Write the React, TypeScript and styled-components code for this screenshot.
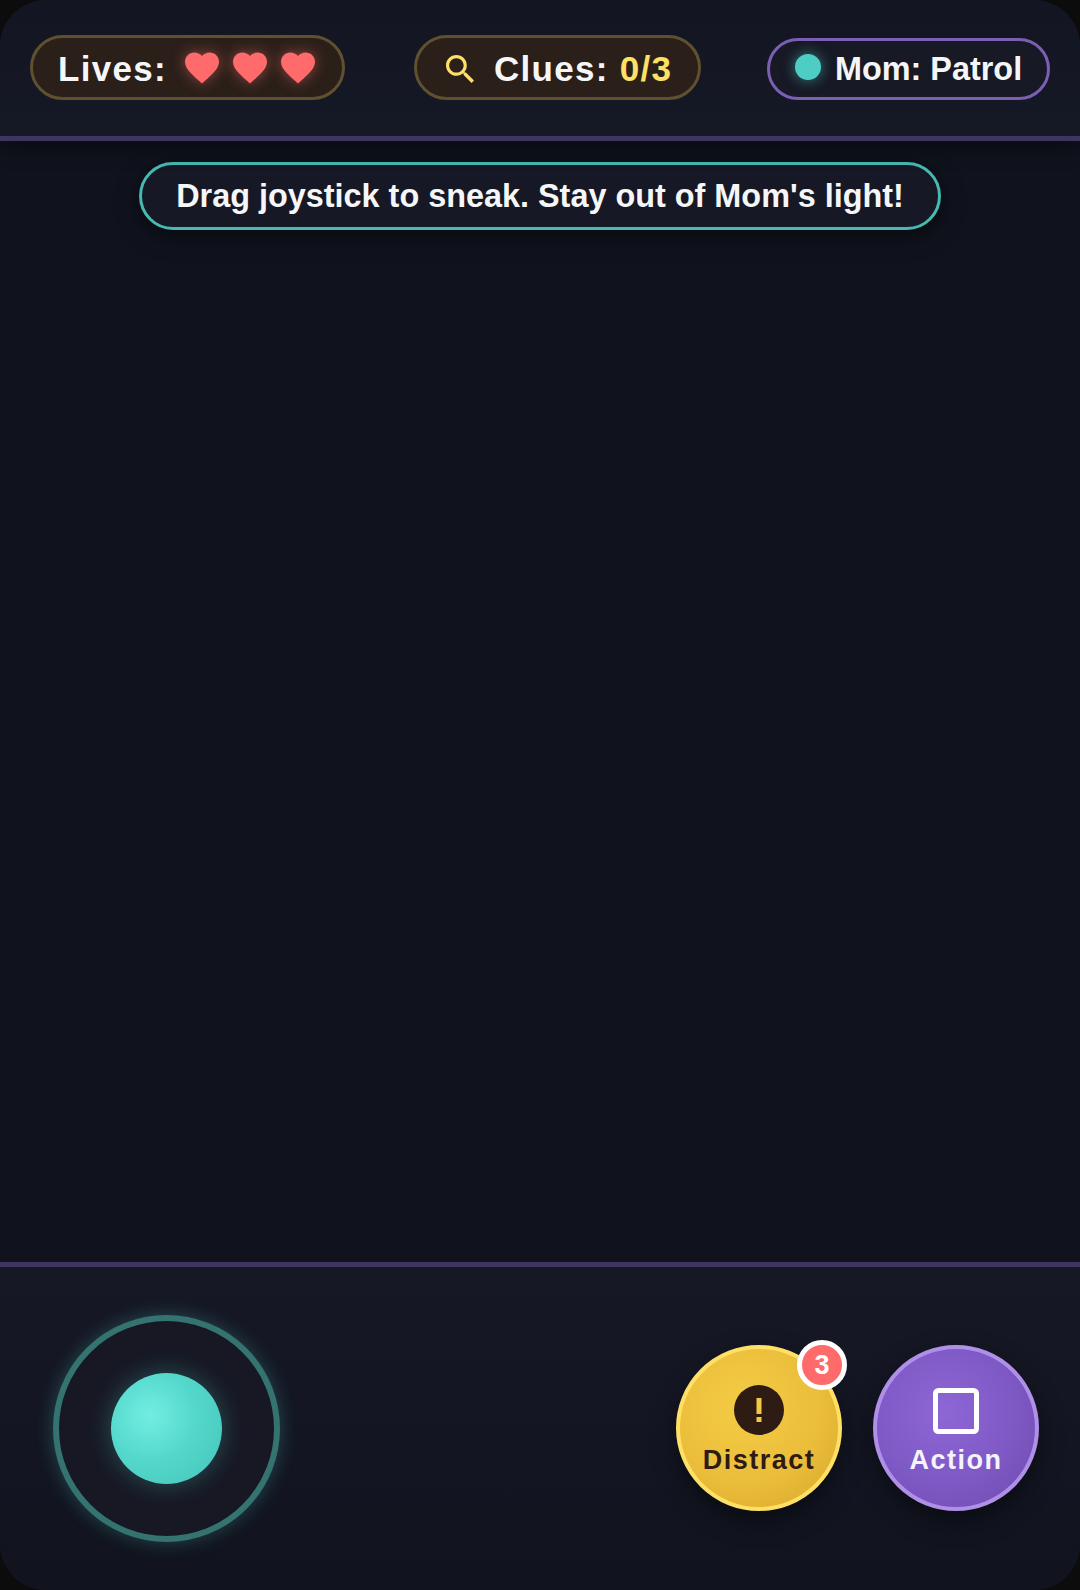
import React from "react";
import styled, { createGlobalStyle } from "styled-components";

const Global = createGlobalStyle`
  html, body { margin: 0; padding: 0; background: #0c0c0c; }
  body { font-family: "Liberation Sans", Arial, sans-serif; }
  * { box-sizing: border-box; }
`;

const Frame = styled.div`
  width: 1080px;
  height: 1590px;
  border-radius: 46px;
  overflow: hidden;
  display: flex;
  flex-direction: column;
  background: #10131d;
`;

const TopBar = styled.header`
  height: 141px;
  flex: none;
  display: flex;
  align-items: flex-start;
  padding: 35px 30px 0 30px;
  background: linear-gradient(180deg, #131522 0%, #151825 100%);
  border-bottom: 5px solid #3f3560;
  box-shadow: 0 6px 20px rgba(0, 0, 0, 0.45);
  position: relative;
  z-index: 1;
`;

const GoldPill = styled.div<{ $w: number; $gap: number }>`
  width: ${(p) => p.$w}px;
  height: 65px;
  margin-right: ${(p) => p.$gap}px;
  flex: none;
  display: flex;
  align-items: center;
  padding-top: 2px;
  border: 3px solid #5f5130;
  border-radius: 33px;
  background: #2b1f19;
  color: #f5f6f8;
  font-size: 35px;
  font-weight: 700;
  letter-spacing: 1.3px;
  white-space: nowrap;
`;

const LivesLabel = styled.span`
  margin-left: 25px;
  margin-right: 18px;
`;

const HeartRow = styled.div`
  display: flex;
  gap: 14px;
  margin-bottom: 2px;
`;

const Heart = styled.svg`
  width: 34px;
  height: 32px;
  display: block;
  fill: #ff6b6b;
  filter: drop-shadow(0 0 7px rgba(255, 107, 107, 0.5));
`;

const SearchIcon = styled.svg`
  width: 28px;
  height: 28px;
  margin-left: 29px;
  margin-right: 20px;
  flex: none;
  fill: #ffe066;
`;

const Gold = styled.span`
  color: #ffe066;
`;

const MomPill = styled.div`
  width: 283px;
  height: 62px;
  margin-top: 3px;
  flex: none;
  display: flex;
  align-items: center;
  gap: 14px;
  padding-left: 25px;
  border: 3px solid #7b5fb3;
  border-radius: 31px;
  background: #171925;
  color: #f5f6f8;
  font-size: 32.4px;
  font-weight: 700;
  white-space: nowrap;
`;

const Dot = styled.span`
  width: 26px;
  height: 26px;
  margin-bottom: 4px;
  flex: none;
  border-radius: 50%;
  background: #4ecdc4;
  box-shadow: 0 0 14px rgba(78, 205, 196, 0.6);
`;

const Stage = styled.main`
  flex: 1;
  position: relative;
  background: #10131d;
`;

const Tip = styled.div`
  position: absolute;
  top: 21px;
  left: 139px;
  width: 802px;
  height: 68px;
  display: flex;
  align-items: center;
  justify-content: center;
  border: 3px solid #46b9b0;
  border-radius: 34px;
  background: #161925;
  color: #f5f6f8;
  font-size: 32.4px;
  font-weight: 700;
  white-space: nowrap;
  box-shadow: 0 6px 22px rgba(0, 0, 0, 0.5);
`;

const Controls = styled.footer`
  height: 328px;
  flex: none;
  display: flex;
  align-items: flex-start;
  justify-content: space-between;
  padding: 48px 41px 0 53px;
  background: linear-gradient(180deg, #161825 0%, #131622 60%, #11141e 100%);
  border-top: 5px solid #3f3560;
`;

const JoyRing = styled.div`
  width: 227px;
  height: 227px;
  display: flex;
  align-items: center;
  justify-content: center;
  border: 6px solid #34736f;
  border-radius: 50%;
  background: #171824;
  box-shadow: 0 0 18px rgba(78, 205, 196, 0.28);
`;

const JoyKnob = styled.div`
  width: 111px;
  height: 111px;
  border-radius: 50%;
  background: radial-gradient(circle at 35% 38%, #72eee1 0%, #55d8cc 45%, #43c3ba 100%);
  box-shadow: 0 0 26px rgba(78, 205, 196, 0.32);
`;

const Buttons = styled.div`
  display: flex;
  gap: 31px;
  margin-top: 30px;
`;

const RoundButton = styled.div<{ $variant: "gold" | "purple" }>`
  width: 166px;
  height: 166px;
  position: relative;
  display: flex;
  flex-direction: column;
  align-items: center;
  padding-top: ${(p) => (p.$variant === "gold" ? 35 : 38)}px;
  border-radius: 50%;
  border: 4px solid ${(p) => (p.$variant === "gold" ? "#ffe066" : "#b08fe8")};
  background: ${(p) =>
    p.$variant === "gold"
      ? "radial-gradient(circle at 40% 36%, #f5cc45 0%, #eabd3a 55%, #d9a82c 100%)"
      : "radial-gradient(circle at 42% 40%, #8e67d6 0%, #7e58c4 55%, #6c4bac 100%)"};
  color: ${(p) => (p.$variant === "gold" ? "#2d1b14" : "#f5f3fb")};
  box-shadow: 0 10px 26px rgba(0, 0, 0, 0.45);
`;

const ButtonLabel = styled.span<{ $top: number }>`
  margin-top: ${(p) => p.$top}px;
  font-size: 27px;
  line-height: 31px;
  font-weight: 700;
  letter-spacing: 1.5px;
`;

const AlertIcon = styled.svg`
  width: 50px;
  height: 50px;
  margin-top: 1px;
  display: block;
`;

const SquareIcon = styled.svg`
  width: 46px;
  height: 46px;
  margin-top: 1px;
  display: block;
  fill: none;
  stroke: #ffffff;
  stroke-width: 5;
`;

const Badge = styled.span`
  position: absolute;
  top: -9px;
  right: -9px;
  width: 50px;
  height: 50px;
  display: flex;
  align-items: center;
  justify-content: center;
  border: 5px solid #ffffff;
  border-radius: 50%;
  background: #ff6b6b;
  color: #ffffff;
  font-size: 27px;
  font-weight: 700;
`;

const heartPath =
  "M12 21.35l-1.45-1.32C5.4 15.36 2 12.28 2 8.5 2 5.42 4.42 3 7.5 3c1.74 0 3.41.81 4.5 2.09C13.09 3.81 14.76 3 16.5 3 19.58 3 22 5.42 22 8.5c0 3.78-3.4 6.86-8.55 11.54L12 21.35z";

const searchPath =
  "M15.5 14h-.79l-.28-.27C15.41 12.59 16 11.11 16 9.5 16 5.91 13.09 3 9.5 3S3 5.91 3 9.5 5.91 16 9.5 16c1.61 0 3.09-.59 4.23-1.57l.27.28v.79l5 4.99L20.49 19l-4.99-5zm-6 0C7.01 14 5 11.99 5 9.5S7.01 5 9.5 5 14 7.01 14 9.5 11.99 14 9.5 14z";

export default function App() {
  return (
    <>
      <Global />
      <Frame>
        <TopBar>
          <GoldPill $w={315} $gap={69}>
            <LivesLabel>Lives:</LivesLabel>
            <HeartRow>
              {[0, 1, 2].map((i) => (
                <Heart key={i} viewBox="2 3 20 18.35">
                  <path d={heartPath} />
                </Heart>
              ))}
            </HeartRow>
          </GoldPill>
          <GoldPill $w={287} $gap={66}>
            <SearchIcon viewBox="3 3 17.5 17.5">
              <path d={searchPath} />
            </SearchIcon>
            <span>
              Clues: <Gold>0/3</Gold>
            </span>
          </GoldPill>
          <MomPill>
            <Dot />
            <span>Mom: Patrol</span>
          </MomPill>
        </TopBar>
        <Stage>
          <Tip>Drag joystick to sneak. Stay out of Mom's light!</Tip>
        </Stage>
        <Controls>
          <JoyRing>
            <JoyKnob />
          </JoyRing>
          <Buttons>
            <RoundButton $variant="gold">
              <AlertIcon viewBox="0 0 50 50">
                <circle cx="25" cy="25" r="25" fill="#2d1b14" />
                <rect x="22.5" y="13" width="5" height="16" fill="#f5c842" />
                <rect x="22.5" y="32" width="5" height="5" fill="#f5c842" />
              </AlertIcon>
              <ButtonLabel $top={10}>Distract</ButtonLabel>
              <Badge>3</Badge>
            </RoundButton>
            <RoundButton $variant="purple">
              <SquareIcon viewBox="0 0 46 46">
                <rect x="2.5" y="2.5" width="41" height="41" rx="3" />
              </SquareIcon>
              <ButtonLabel $top={11}>Action</ButtonLabel>
            </RoundButton>
          </Buttons>
        </Controls>
      </Frame>
    </>
  );
}
